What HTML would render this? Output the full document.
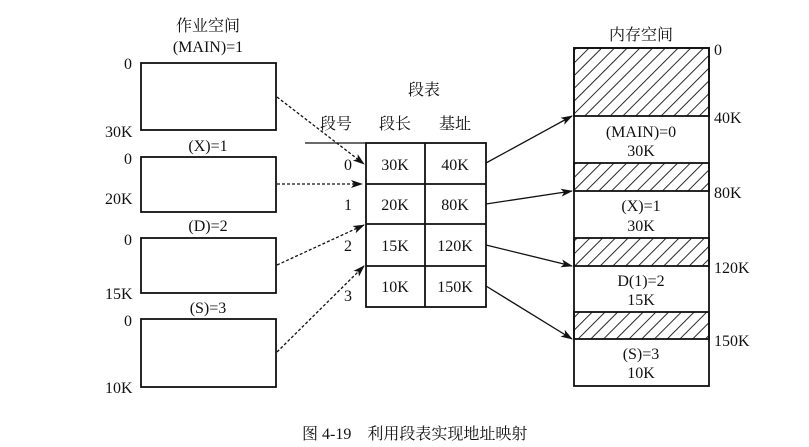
<!DOCTYPE html>
<html><head><meta charset="utf-8"><style>
html,body{margin:0;padding:0;background:#fff;}
svg{display:block}
text{font-family:"Liberation Serif","Noto Serif CJK SC",serif;font-size:16px;fill:#111;}
.c{font-family:"Liberation Serif","Noto Serif CJK SC","Noto Sans CJK SC",serif;font-size:16px;}
</style></head><body>
<svg width="809" height="447" viewBox="0 0 809 447" xmlns="http://www.w3.org/2000/svg">
<defs>
<pattern id="h" width="9" height="9" patternUnits="userSpaceOnUse" patternTransform="rotate(45)">
<rect width="9" height="9" fill="#fff"/><line x1="0" y1="0" x2="0" y2="9" stroke="#111" stroke-width="1.8"/></pattern>
<marker id="a" markerWidth="12" markerHeight="8" refX="11" refY="4" orient="auto" markerUnits="userSpaceOnUse"><path d="M0,0 L12,4 L0,8 L3,4z" fill="#111"/></marker>
</defs>
<g stroke="#111" stroke-width="1.8" fill="none">
<rect x="141" y="63" width="135" height="67"/>
<rect x="141" y="157" width="135" height="55"/>
<rect x="141" y="238" width="135" height="55"/>
<rect x="141" y="319" width="135" height="68"/>
<rect x="366" y="143" width="120" height="164"/>
<line x1="425" y1="143" x2="425" y2="307"/>
<line x1="366" y1="184" x2="486" y2="184"/>
<line x1="366" y1="224" x2="486" y2="224"/>
<line x1="366" y1="266" x2="486" y2="266"/>
<line x1="305" y1="143" x2="366" y2="143" stroke-width="1.2"/>
<rect x="574" y="48" width="135" height="68" fill="url(#h)"/>
<rect x="574" y="163" width="135" height="28" fill="url(#h)"/>
<rect x="574" y="238" width="135" height="28" fill="url(#h)"/>
<rect x="574" y="312" width="135" height="27" fill="url(#h)"/>
<rect x="574" y="48" width="135" height="338"/>
</g>
<g stroke="#111" stroke-width="1.3" stroke-dasharray="3,2" fill="none">
<line x1="277" y1="97" x2="364" y2="164" marker-end="url(#a)"/>
<line x1="277" y1="184" x2="362" y2="184" marker-end="url(#a)"/>
<line x1="277" y1="265" x2="364" y2="225" marker-end="url(#a)"/>
<line x1="277" y1="352" x2="364" y2="266" marker-end="url(#a)"/>
</g>
<g stroke="#111" stroke-width="1.3" fill="none">
<line x1="486" y1="163" x2="572" y2="116" marker-end="url(#a)"/>
<line x1="486" y1="204" x2="572" y2="191" marker-end="url(#a)"/>
<line x1="486" y1="245" x2="572" y2="266" marker-end="url(#a)"/>
<line x1="486" y1="286" x2="572" y2="339" marker-end="url(#a)"/>
</g>
<text class="c" x="208" y="31" text-anchor="middle">作业空间</text>
<text x="208" y="52" text-anchor="middle">(MAIN)=1</text>
<text x="124" y="69">0</text><text x="105" y="137">30K</text>
<text x="208" y="151" text-anchor="middle">(X)=1</text>
<text x="124" y="164">0</text><text x="105" y="204">20K</text>
<text x="208" y="231" text-anchor="middle">(D)=2</text>
<text x="124" y="245">0</text><text x="105" y="299">15K</text>
<text x="208" y="313" text-anchor="middle">(S)=3</text>
<text x="124" y="326">0</text><text x="105" y="393">10K</text>
<text class="c" x="424" y="95" text-anchor="middle">段表</text>
<text class="c" x="336" y="129" text-anchor="middle">段号</text>
<text class="c" x="395" y="129" text-anchor="middle">段长</text>
<text class="c" x="455" y="129" text-anchor="middle">基址</text>
<text x="344" y="170">0</text><text x="344" y="210">1</text><text x="344" y="251">2</text><text x="344" y="301">3</text>
<text x="395" y="170" text-anchor="middle">30K</text><text x="455" y="170" text-anchor="middle">40K</text>
<text x="395" y="210" text-anchor="middle">20K</text><text x="455" y="210" text-anchor="middle">80K</text>
<text x="395" y="251" text-anchor="middle">15K</text><text x="455" y="251" text-anchor="middle">120K</text>
<text x="395" y="292" text-anchor="middle">10K</text><text x="455" y="292" text-anchor="middle">150K</text>
<text class="c" x="641" y="40" text-anchor="middle">内存空间</text>
<text x="714" y="55">0</text>
<text x="714" y="123">40K</text><text x="714" y="198">80K</text><text x="714" y="273">120K</text><text x="714" y="346">150K</text>
<text x="641" y="137" text-anchor="middle">(MAIN)=0</text><text x="641" y="156" text-anchor="middle">30K</text>
<text x="641" y="211" text-anchor="middle">(X)=1</text><text x="641" y="231" text-anchor="middle">30K</text>
<text x="641" y="286" text-anchor="middle">D(1)=2</text><text x="641" y="305" text-anchor="middle">15K</text>
<text x="641" y="359" text-anchor="middle">(S)=3</text><text x="641" y="378" text-anchor="middle">10K</text>
<text class="c" x="302" y="439">图 4-19　利用段表实现地址映射</text>
</svg>
</body></html>
